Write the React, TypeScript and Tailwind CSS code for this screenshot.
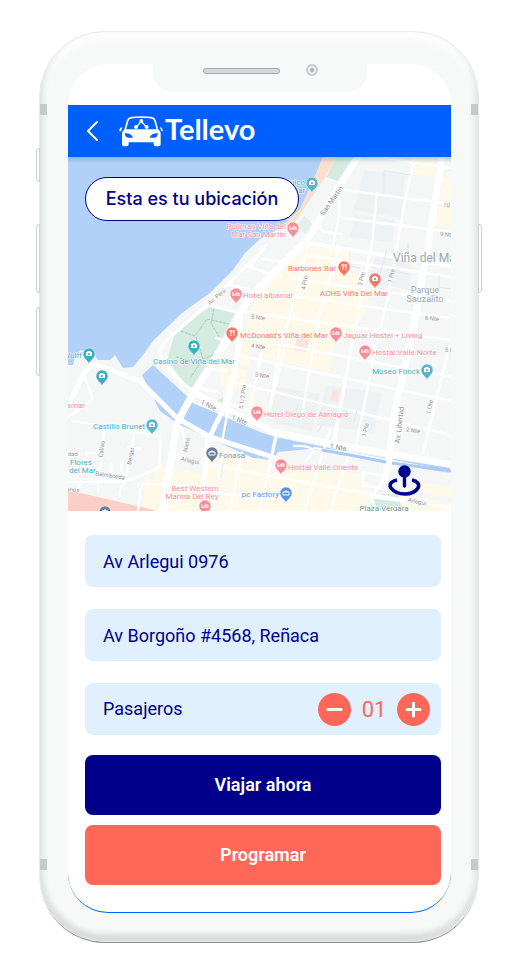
import { useState } from "react";
import type { ReactNode } from "react";

const ROBOTO = "font-[Roboto,'Liberation_Sans',sans-serif]";

type Glyph = "bed" | "camera" | "fork" | "bag";

const TEAL = "#4aa9bd";
const PINK = "#fb8d98";
const CORAL = "#fb7565";
const SLATE = "#687b98";
const BLUE = "#5a93e6";

const pins: { x: number; y: number; color: string; glyph: Glyph }[] = [
  { x: 312, y: 184, color: "#57b5cb", glyph: "camera" },
  { x: 293, y: 229, color: PINK, glyph: "bed" },
  { x: 344, y: 268, color: CORAL, glyph: "fork" },
  { x: 375, y: 280, color: CORAL, glyph: "camera" },
  { x: 236, y: 295, color: PINK, glyph: "bed" },
  { x: 232, y: 334, color: CORAL, glyph: "fork" },
  { x: 336, y: 334, color: PINK, glyph: "bed" },
  { x: 365, y: 352, color: PINK, glyph: "bed" },
  { x: 194, y: 347, color: "#3fabc4", glyph: "camera" },
  { x: 89, y: 355, color: "#3fabc4", glyph: "camera" },
  { x: 102, y: 377, color: "#3fabc4", glyph: "camera" },
  { x: 427, y: 371, color: "#57b5cb", glyph: "camera" },
  { x: 257, y: 413, color: PINK, glyph: "bed" },
  { x: 152, y: 426, color: "#57b5cb", glyph: "camera" },
  { x: 212, y: 454, color: SLATE, glyph: "bag" },
  { x: 281, y: 466, color: PINK, glyph: "bed" },
  { x: 286, y: 494, color: BLUE, glyph: "bag" },
  { x: 205, y: 507, color: PINK, glyph: "bed" },
  { x: 105, y: 513, color: SLATE, glyph: "bag" },
];

const places: { x: number; y: number; text: string; color: string; anchor?: "start" | "middle" | "end" }[] = [
  { x: 305, y: 185, text: "Pulco", color: TEAL, anchor: "end" },
  { x: 305, y: 193, text: "Mar", color: TEAL, anchor: "end" },
  { x: 286, y: 229, text: "Pullman Viña del", color: PINK, anchor: "end" },
  { x: 286, y: 237, text: "Mar San Martín", color: PINK, anchor: "end" },
  { x: 336, y: 271, text: "Barbones Bar", color: CORAL, anchor: "end" },
  { x: 354, y: 296, text: "ACHS Viña Del Mar", color: CORAL, anchor: "middle" },
  { x: 243, y: 298, text: "Hotel albamar", color: PINK },
  { x: 240, y: 338, text: "McDonald's Viña del Mar", color: CORAL },
  { x: 343, y: 338, text: "Jaguar Hostel + Living", color: PINK },
  { x: 372, y: 355, text: "Hostal Valle Norte", color: PINK },
  { x: 194, y: 364, text: "Casino de Viña del Mar", color: TEAL, anchor: "middle" },
  { x: 82, y: 358, text: "Wulff", color: TEAL, anchor: "end" },
  { x: 420, y: 374, text: "Museo Fonck", color: TEAL, anchor: "end" },
  { x: 85, y: 408, text: "Miramar", color: PINK, anchor: "end" },
  { x: 264, y: 417, text: "Hotel Diego de Almagro", color: PINK },
  { x: 145, y: 429, text: "Castillo Brunet", color: TEAL, anchor: "end" },
  { x: 219, y: 458, text: "Fonasa", color: "#8791a5" },
  { x: 70, y: 465, text: "Flores", color: TEAL },
  { x: 69, y: 473, text: "del Mar", color: TEAL },
  { x: 288, y: 470, text: "Hostal Valle Oriente", color: PINK },
  { x: 195, y: 491, text: "Best Western", color: PINK, anchor: "middle" },
  { x: 192, y: 499, text: "Marina Del Rey", color: PINK, anchor: "middle" },
  { x: 279, y: 497, text: "pc Factory", color: BLUE, anchor: "end" },
  { x: 384, y: 511, text: "Plaza Vergara", color: "#78949a", anchor: "middle" },
];

const streets: { x: number; y: number; angle: number; text: string; big?: boolean }[] = [
  { x: 332, y: 201, angle: -55, text: "San Martín", big: true },
  { x: 217, y: 297, angle: -40, text: "Av. Perú" },
  { x: 305, y: 283, angle: -80, text: "4 Pte" },
  { x: 362, y: 279, angle: -78, text: "2 Pte" },
  { x: 392, y: 276, angle: -78, text: "1 Pte" },
  { x: 452, y: 206, angle: 6, text: "10 Nte" },
  { x: 447, y: 235, angle: 7, text: "9 Nte" },
  { x: 258, y: 318, angle: 6, text: "5 Nte" },
  { x: 432, y: 319, angle: 6, text: "6 Nte" },
  { x: 258, y: 347, angle: 8, text: "4 Nte" },
  { x: 452, y: 351, angle: 6, text: "5 Nte" },
  { x: 262, y: 376, angle: 8, text: "3 Nte" },
  { x: 243, y: 397, angle: -82, text: "5 1/2 Pte" },
  { x: 209, y: 406, angle: 27, text: "1 Nte.", big: true },
  { x: 240, y: 421, angle: 20, text: "1 Nte.", big: true },
  { x: 339, y: 448, angle: 10, text: "1 Nte.", big: true },
  { x: 366, y: 430, angle: -78, text: "1 Pte" },
  { x: 413, y: 431, angle: 8, text: "2 Nte" },
  { x: 430, y: 407, angle: -80, text: "1 Ote" },
  { x: 400, y: 425, angle: -83, text: "Av. Libertad", big: true },
  { x: 102, y: 449, angle: -82, text: "Callao" },
  { x: 131, y: 456, angle: -80, text: "Berger" },
  { x: 187, y: 445, angle: -80, text: "Nieto" },
  { x: 110, y: 476, angle: 9, text: "Balmaceda" },
  { x: 190, y: 461, angle: 12, text: "Arlegui" },
  { x: 417, y: 502, angle: 12, text: "Arlegui" },
  { x: 71, y: 454, angle: 0, text: "Edad" },
  { x: 71, y: 490, angle: 4, text: "Canos" },
];

const glyphPaths: Record<Glyph, ReactNode> = {
  bed: <path d="M-3-2v4M-3 1h6V-1H0v2M3 1v1" fill="none" stroke="#fff" strokeWidth="1" />,
  camera: (
    <>
      <path d="M-3-2h1l1-1h2l1 1h1v4h-6z" fill="#fff" />
      <circle r="1" fill="#4ba9bf" />
    </>
  ),
  fork: <path d="M-2-3v2h2v-2M-1-3v6M2-3v6M2-3l-1 3" fill="none" stroke="#fff" strokeWidth=".8" />,
  bag: <path d="M-3-1h6v3h-6zM-1-1v-1h2v1" fill="none" stroke="#fff" strokeWidth="1" />,
};

function CityMap() {
  return (
    <svg viewBox="68 157 383 354" className="block h-auto w-full bg-[#f5f7f7]" role="img" aria-label="Mapa de Viña del Mar">
      <defs>
        <linearGradient id="headerShade" x1="0" y1="0" x2="0" y2="1">
          <stop offset="0" stopColor="#5d83b5" stopOpacity=".4" />
          <stop offset="1" stopColor="#5d83b5" stopOpacity="0" />
        </linearGradient>
      </defs>

      {/* built-up blocks */}
      <g fill="#fef9e9">
        <path d="M306 246l46 6-4 20 13 3-2 17 12 2-6 19-12 20-30-3-5 20-10-2-48-8-15-4 8-43 18-16z" />
        <path d="M250 318l84 12-2 30-3 12-65-14z" />
        <path d="M411 157h24l-2 20-21-3zM437 178l14 2v22l-17-3zM433 205l18 3v20l-20-4z" />
        <path d="M240 332l14 3-5 32-14-4zM222 364l24 6-2 20-24-5zM250 390l5 1-2 16-6-1z" />
        <path d="M155 465l55 10 42 6 42-16-12-5 90 30-8 21H155z" />
        <path d="M210 445l62 18-6 48h-64z" />
        <path d="M276 465l84 9 8 37h-98zM390 492l61 11v8h-64zM146 478l24 4-4 29h-24zM418 482l33 5v10l-30-5z" />
      </g>
      <g fill="#eff2f3">
        <path d="M365 170l40 6-4 42-48-8zM355 215l40 5-2 23-43-6zM376 255l37 6-4 29-42-7zM326 385l56 8-8 40-57-8zM270 386l50 8-8 37-45-10z" />
      </g>

      {/* water */}
      <path
        d="M68 157H323L311 186 300 209 280 228 260 239 245 253 233 270 210 293 182 313 153 341 143 355 133 367 123 368 115 355 110 360H98L93 353 80 350 78 357H75L73 365H68Z"
        fill="#b2d1f8"
      />
      <path
        d="M142 375l11-10 35 32 5 6 67 29 15 5 75 15 100 16v5l-60-10-47-11-33-3-32 3-5 8-20-2-77-35-6-5-10-7z"
        fill="#b2d1f8"
      />
      <path d="M323 157h13l-12 22-16 24-14 20-14 5 20-19 11-23z" fill="#fbe0d0" />
      <path d="M336 157h19l-17 24-12-4z" fill="#d7eade" />
      <path d="M304 216l10 9-7 10-10-9z" fill="#e3efe7" />

      {/* parks */}
      <path d="M210 307l25 6-12 24-26 50-9 1-21-28 8-27 20-16z" fill="#d3ebe0" />
      <path d="M181 331l14 5 12-17 22 5M196 337l7 22-13 19M203 359l12-5M176 357l20 5M214 309l-3 14 10 17" fill="none" stroke="#a8c9bb" strokeWidth="1" strokeDasharray="3 1" />
      <path d="M376 495l22-2 4 18h-34z" fill="#d3ebe0" />
      <path d="M215 402l8-5v8z" fill="#d9ebdc" />
      <path d="M68 490l86 20v1H68z" fill="#fbcfc5" />
      <path d="M297 337l12 2-3 13-12-2zM333 389l7 2-3 11-7-2z" fill="#fbe3df" />

      {/* roads */}
      <g fill="none" stroke="#fff" strokeLinejoin="round" strokeLinecap="round">
        <g strokeWidth="2.4">
          <path d="M343 190l108 14M343 218l108 14M340 189l-1 28-6 28M377 193l-5 50-20 100-17 100M414 160l-9 40-17 96-12 50-20 100M312 222l12 10 18 2" />
          <path d="M308 245l-13 52-16 55-10 60M338 249l-20 70-16 96M370 250l-17 90-20 101" />
          <path d="M307 255l144 22M294 279l157 22M255 291l196 27M245 312l206 28M242 337l209 40M237 355l214 46M230 381l221 54M224 402l48 16" />
          <path d="M216 338l14 4M207 368l20 3M195 387l22 5M385 158l66 10M451 340l-28 113M266 245l-16 22 30 10M262 259l22 3M207 305l33 8M228 284l22 6" />
          <path d="M240 342l-7 42-11 58M262 350l-14 70M284 350l-16 67M330 430l-25 80M275 438l-7 34-8 39M350 451l-20 60" />
          <path d="M73 421l84 15q4 0 4 6l-2 26q-12 4-23 10l-18 4H68M104 429l-6 60M134 434l-7 38M86 453h17M71 453l-3 6M140 449l-12-2M126 475l-8-2M85 378l8 21-25 18" />
          <path d="M87 453l-8 35M111 473v-10M121 473l1-12M68 477l58 5q-8 7-6 14M140 491l3-7 23 1 42 7 60 8M140 491l-2 20M173 456l70 15 92 17 116 20M224 447l-12 64M242 452l-12 59M182 428l6 27M294 446q16-1 20 5l-8 10M362 472l24 4 1-14M363 473v12l18 3M383 480l-11 17 4 14M370 497l81 10" />
        </g>
        <path d="M260 253l-53 52-40 35-8 11q2 15 36 42" strokeWidth="3" />
        <path d="M240 313v17l-5 40-12 40-15 30-6 71" strokeWidth="5" />
        <path d="M358 157l-12 18-39 65-57 57-10 16-13 27-34 53-16 30-14 87" strokeWidth="7" />
        <path d="M442 157l-13 83-18 102-16 68-6 49-5 22" strokeWidth="7" />
        <path d="M68 405l17-33q5-8 12-7l43 16 37 37 33 19 50 16 15 5" strokeWidth="5" />
        <path d="M196 394l78 38 60 12 57 10 60 10" strokeWidth="6" />
        <path d="M314 448l36 5 38 7 63 12" strokeWidth="2" />
        <path d="M308 243l143 23" strokeWidth="4" />
        <path d="M276 437l-7 33M388 458l-4 22" strokeWidth="3" />
      </g>
      <path d="M322 450l28 5 36 7M392 463l59 8" fill="none" stroke="#a9cbf7" strokeWidth="3" />
      <g fill="none" stroke="#e4e8ec" strokeWidth="1">
        <path d="M384 195v-24l27 4M387 250l-7 23M350 251v15l10 2M298 404l-4 16M357 410l-3 12M388 270l20 4M408 243v12l10 2M439 275v12l12 2M322 424l-4 8M223 463l-2 14" />
      </g>

      <g className={ROBOTO} fontSize="6" fill="#8c9298">
        {streets.map((s, i) => (
          <text
            key={i}
            transform={`translate(${s.x} ${s.y}) rotate(${s.angle})`}
            textAnchor="middle"
            dominantBaseline="middle"
            fontSize={s.big ? 7 : 6}
            stroke="#fff"
            strokeWidth="1"
            paintOrder="stroke"
          >
            {s.text}
          </text>
        ))}
      </g>

      <g className={ROBOTO} fill="#a2a9ae">
        <text x="393" y="262" fontSize="12">Viña del Mar</text>
        <text x="425" y="293" fontSize="9" textAnchor="middle">Parque</text>
        <text x="425" y="302" fontSize="9" textAnchor="middle">Sauzalito</text>
      </g>

      {pins.map((p, i) => (
        <g key={i} transform={`translate(${p.x} ${p.y})`}>
          <path d="M0 9C-1 5-6 4-6-1A6 6 0 0 1 6-1C6 4 1 5 0 9Z" fill={p.color} stroke="#fff" strokeWidth=".5" />
          <g transform="translate(0 -1)">{glyphPaths[p.glyph]}</g>
        </g>
      ))}

      <g className={ROBOTO} fontSize="8">
        {places.map((p, i) => (
          <text key={i} x={p.x} y={p.y} fill={p.color} textAnchor={p.anchor ?? "start"} stroke="#fff" strokeWidth="1" paintOrder="stroke">
            {p.text}
          </text>
        ))}
      </g>

      {/* current position */}
      <path d="M397 480C388 482 390 487 391 488C397 496 413 496 418 488C420 484 417 481 412 480" fill="none" stroke="#00008b" strokeWidth="3.600" />
      <path d="M404.500 472v14" stroke="#00008b" strokeWidth="3.400" strokeLinecap="round" />
      <circle cx="404.500" cy="471.500" r="6.200" fill="#00008b" />
      <rect x="68" y="157" width="383" height="6" fill="url(#headerShade)" />
    </svg>
  );
}

function CarLogo() {
  return (
    <svg viewBox="28 28 132 96" className="h-8 w-11 shrink-0" aria-hidden="true">
      <path d="M46 74L54 45Q57 37 65 36Q95 32 125 36Q133 37 136 45L144 74" fill="none" stroke="#fff" strokeWidth="5" />
      <path
        fill="#fff"
        fillRule="evenodd"
        d="M46 71H144Q153 75 153 86V116Q153 122 147 122H138Q132 122 132 116V110H57V116Q57 122 51 122H43Q37 122 37 116V86Q37 75 46 71ZM46 82Q45 95 56 96H70Q66 83 46 82ZM144 82Q124 83 120 96H134Q145 95 144 82Z"
      />
      <path d="M29 77Q28 66 38 65L34 77ZM159 77Q160 66 151 65L155 77Z" fill="#fff" />
      <path d="M95 47L80 64M95 47L110 64" stroke="#fff" strokeWidth="4" />
      <g fill="#fff">
        <circle cx="95" cy="46" r="6" />
        <circle cx="79" cy="64" r="6" />
        <circle cx="111" cy="64" r="6" />
      </g>
    </svg>
  );
}

function StepButton({ label, onClick, plus }: { label: string; onClick: () => void; plus?: boolean }) {
  return (
    <button type="button" aria-label={label} onClick={onClick} className="flex size-[33px] items-center justify-center rounded-full bg-[#ff6759]">
      <svg viewBox="0 0 17 17" className="size-[17px]" fill="none" stroke="#fff" strokeWidth="3" strokeLinecap="round" aria-hidden="true">
        <path d={plus ? "M2 8.500h13M8.500 2v13" : "M2 8.500h13"} />
      </svg>
    </button>
  );
}

const field = "h-[52px] w-full rounded-lg bg-[#e0f0ff] px-[18px] text-lg text-[#00008b] outline-none";

export default function App() {
  const [origin, setOrigin] = useState("Av Arlegui 0976");
  const [destination, setDestination] = useState("Av Borgoño #4568, Reñaca");
  const [passengers, setPassengers] = useState(1);

  return (
    <main className={`min-h-screen bg-white pt-[31px] pr-[43px] pb-[38px] pl-[39px] ${ROBOTO}`}>
      <div className="relative rounded-[66px] border border-[#e9eaea] bg-[#f7f8f8] pt-8 pr-[27px] pb-7 pl-7 shadow-[inset_6px_-4px_6px_-3px_#dfe1e1,inset_-6px_-4px_6px_-3px_#e3e5e5,inset_0_-8px_7px_-3px_#c5cac9,inset_0_9px_6px_#fdfdfd,0_2px_0_-1px_#8b8c9b]">
        {/* side keys and antenna bands */}
        <span className="absolute top-[116px] -left-1 h-[34px] w-1 rounded-l-sm border border-[#cfd3d4] bg-white" />
        <span className="absolute top-48 -left-1 h-[69px] w-1 rounded-l-sm border border-[#cfd3d4] bg-white" />
        <span className="absolute top-[275px] -left-1 h-[69px] w-1 rounded-l-sm border border-[#cfd3d4] bg-white" />
        <span className="absolute top-48 -right-1 h-[69px] w-1 rounded-r-sm border border-[#cfd3d4] bg-white" />
        <span className="absolute top-[72px] left-0 h-[11px] w-[7px] bg-[#c5cbcb]" />
        <span className="absolute top-[72px] right-0 h-[11px] w-[7px] bg-[#c5cbcb]" />
        <span className="absolute bottom-[71px] left-0 h-[11px] w-[7px] bg-[#c5cbcb]" />
        <span className="absolute right-0 bottom-[71px] h-[11px] w-[7px] bg-[#c5cbcb]" />

        <div className="overflow-hidden rounded-[40px] border-b border-[#0060ff] bg-white">
          <div className="flex h-[41px] justify-center">
            <div className="relative flex h-7 w-[214px] items-start rounded-b-[20px] bg-[#f7f8f8]">
              <span className="mt-1 ml-[50px] h-[6px] w-[77px] rounded-full border border-[#a5a9b4] bg-[#d5d9d8]" />
              <span className="ml-[26px] size-3 rounded-full border-2 border-[#c9cbd0] bg-[#eceeee] p-[2px]">
                <span className="block size-full rounded-full bg-[#a9acb5]" />
              </span>
            </div>
          </div>

          <header className="flex h-[52px] items-center bg-[#0060ff] pl-[17px] text-white">
            <button type="button" aria-label="Volver" className="mr-[18px]">
              <svg viewBox="0 0 16 22" className="h-[22px] w-4" fill="none" stroke="currentColor" strokeWidth="2" strokeLinecap="round" strokeLinejoin="round" aria-hidden="true">
                <path d="M12 2L3 11l9 9" />
              </svg>
            </button>
            <CarLogo />
            <h1 className="mb-1 ml-[2px] font-[Lato,'Liberation_Sans',sans-serif] text-[29px] leading-8 font-bold">Tellevo</h1>
          </header>

          <section className="relative">
            <CityMap />
            <p className="absolute top-5 left-[17px] flex h-11 w-[214px] items-center justify-center rounded-full border border-[#00008b] bg-white font-[Inter,'Liberation_Sans',sans-serif] text-lg font-medium whitespace-nowrap text-[#00008b]">
              Esta es tu ubicación
            </p>
          </section>

          <form className="pt-6 pr-[10px] pb-[27px] pl-[17px]" onSubmit={(e) => e.preventDefault()}>
            <div className="mb-5 flex flex-col gap-[22px]">
              <input aria-label="Origen" className={field} value={origin} onChange={(e) => setOrigin(e.target.value)} />
              <input aria-label="Destino" className={field} value={destination} onChange={(e) => setDestination(e.target.value)} />
              <div className="flex h-[52px] items-center rounded-lg bg-[#e0f0ff] pr-[11px] pl-[18px]">
                <span id="passengers" className="flex-1 text-lg text-[#00008b]">Pasajeros</span>
                <StepButton label="Quitar pasajero" onClick={() => setPassengers((n) => Math.max(1, n - 1))} />
                <output aria-labelledby="passengers" className="w-[46px] text-center text-[22px] text-[#ff6759]">
                  {String(passengers).padStart(2, "0")}
                </output>
                <StepButton label="Agregar pasajero" plus onClick={() => setPassengers((n) => n + 1)} />
              </div>
            </div>
            <div className="flex flex-col gap-[10px] text-lg font-semibold text-white">
              <button type="submit" className="h-[60px] rounded-lg bg-[#00008b]">Viajar ahora</button>
              <button type="button" className="h-[60px] rounded-lg bg-[#ff6759]">Programar</button>
            </div>
          </form>
        </div>
      </div>
    </main>
  );
}
